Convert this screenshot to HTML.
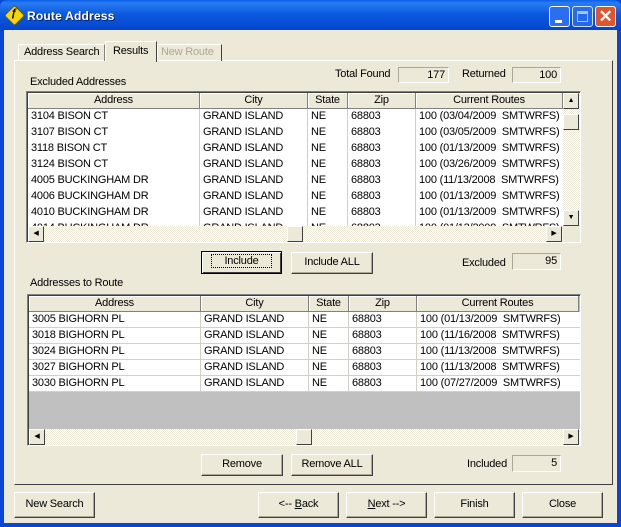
<!DOCTYPE html>
<html><head><style>
*{box-sizing:border-box}
body{margin:0;width:621px;height:527px;overflow:hidden;font-family:"Liberation Sans",sans-serif;font-size:11px;letter-spacing:-0.2px;color:#000;background:#0a45d8}
.a{position:absolute}
#title{left:0;top:0;width:621px;height:31px;background:linear-gradient(#0a5fe8,#2a7bf2 10%,#0b5ae0 45%,#0548d0 90%,#0a3fc0);border-radius:7px 7px 0 0}
#client{left:4px;top:30px;width:613px;height:493px;background:#ece9d8}
.btn{position:absolute;background:#ece9d8;border:1px solid;border-color:#fff #404040 #404040 #fff;box-shadow:inset -1px -1px 0 #aca899;text-align:center;line-height:19px}
.box{position:absolute;background:#ece9d8;border:1px solid;border-color:#aca899 #fff #fff #aca899;text-align:right;padding-right:3px;line-height:14px}
.grid{position:absolute;background:#fff;border:1px solid;border-color:#808080 #fff #fff #808080;box-shadow:inset 1px 1px 0 #404040;overflow:hidden}
.hd{position:absolute;top:1px;height:16px;background:#ece9d8;border-right:1px solid #808080;border-bottom:1px solid #808080;box-shadow:inset 1px 1px 0 #fff;text-align:center;line-height:15px}
.row{position:absolute;left:1px;height:16px;border-bottom:1px solid #d4d0c8;white-space:nowrap;background:#fff}
.c{position:absolute;top:0;height:16px;border-right:1px solid #d4d0c8;padding-left:3px;line-height:15px;overflow:hidden}
.sb{position:absolute;background:repeating-conic-gradient(#fff 0 25%,#ece9d8 0 50%) 0 0/2px 2px}
.sbb{position:absolute;width:16px;height:16px;background:#ece9d8;border:1px solid;border-color:#fff #404040 #404040 #fff;font-size:7px;text-align:center;line-height:14px}
</style></head><body>
<div id="title" class="a"></div>
<div class="a" style="left:7px;top:8px;width:15px;height:15px;background:#f5d60a;transform:rotate(45deg);border:1px solid #6a5a00;border-radius:2px"></div>
<div class="a" style="left:11px;top:7px;font-weight:bold;font-size:11px">ƒ</div>
<div class="a" style="left:27px;top:9px;color:#fff;font-weight:bold;font-size:12px;letter-spacing:0.2px;text-shadow:1px 1px #0a246a">Route Address</div>
<div class="a" style="left:549px;top:6px;width:21px;height:21px;background:#2b6ff0;border:1px solid #fff;border-radius:3px"><div class="a" style="left:5px;top:13px;width:7px;height:3px;background:#fff"></div></div>
<div class="a" style="left:572px;top:6px;width:21px;height:21px;background:#2b6ff0;border:1px solid #fff;border-radius:3px;opacity:.8"><div class="a" style="left:4px;top:4px;width:11px;height:11px;border:1px solid #cfe0ff;border-top-width:3px"></div></div>
<div class="a" style="left:595px;top:6px;width:21px;height:21px;background:#e0552d;border:1px solid #fff;border-radius:3px;color:#fff;font-weight:bold;font-size:17px;text-align:center;line-height:19px">✕</div>
<div id="client" class="a"></div>

<div class="a" style="left:14px;top:60px;width:599px;height:425px;border:1px solid;border-color:#fff #404040 #404040 #fff"></div>
<div class="a" style="left:18px;top:44px;width:87px;height:17px;border:1px solid;border-color:#fff #808080 transparent #fff;border-bottom:none;padding-left:5px;line-height:15px">Address Search</div>
<div class="a" style="left:105px;top:41px;width:52px;height:21px;background:#ece9d8;border:1px solid;border-color:#fff #404040 transparent #fff;border-bottom:none;padding-left:7px;line-height:19px">Results</div>
<div class="a" style="left:157px;top:44px;width:65px;height:17px;border:1px solid;border-color:#fff #404040 transparent #fff;border-bottom:none;padding-left:3px;line-height:15px;color:#aca899">New Route</div>

<div class="a" style="left:335px;top:68px">Total Found</div>
<div class="box" style="left:398px;top:67px;width:51px;height:16px">177</div>
<div class="a" style="left:462px;top:68px">Returned</div>
<div class="box" style="left:512px;top:67px;width:49px;height:16px">100</div>
<div class="a" style="left:30px;top:76px">Excluded Addresses</div>

<div class="grid" style="left:26px;top:91px;width:555px;height:152px">
<div class="hd" style="left:1px;width:172px">Address</div>
<div class="hd" style="left:173px;width:108px">City</div>
<div class="hd" style="left:281px;width:40px">State</div>
<div class="hd" style="left:321px;width:68px">Zip</div>
<div class="hd" style="left:389px;width:147px">Current Routes</div>
<div class="row" style="top:17px"><div class="c" style="left:0;width:172px">3104 BISON CT</div><div class="c" style="left:172px;width:108px">GRAND ISLAND</div><div class="c" style="left:280px;width:40px">NE</div><div class="c" style="left:320px;width:68px">68803</div><div class="c" style="left:388px;width:147px;border:0">100 (03/04/2009 &nbsp;SMTWRFS)</div></div>
<div class="row" style="top:33px"><div class="c" style="left:0;width:172px">3107 BISON CT</div><div class="c" style="left:172px;width:108px">GRAND ISLAND</div><div class="c" style="left:280px;width:40px">NE</div><div class="c" style="left:320px;width:68px">68803</div><div class="c" style="left:388px;width:147px;border:0">100 (03/05/2009 &nbsp;SMTWRFS)</div></div>
<div class="row" style="top:49px"><div class="c" style="left:0;width:172px">3118 BISON CT</div><div class="c" style="left:172px;width:108px">GRAND ISLAND</div><div class="c" style="left:280px;width:40px">NE</div><div class="c" style="left:320px;width:68px">68803</div><div class="c" style="left:388px;width:147px;border:0">100 (01/13/2009 &nbsp;SMTWRFS)</div></div>
<div class="row" style="top:65px"><div class="c" style="left:0;width:172px">3124 BISON CT</div><div class="c" style="left:172px;width:108px">GRAND ISLAND</div><div class="c" style="left:280px;width:40px">NE</div><div class="c" style="left:320px;width:68px">68803</div><div class="c" style="left:388px;width:147px;border:0">100 (03/26/2009 &nbsp;SMTWRFS)</div></div>
<div class="row" style="top:81px"><div class="c" style="left:0;width:172px">4005 BUCKINGHAM DR</div><div class="c" style="left:172px;width:108px">GRAND ISLAND</div><div class="c" style="left:280px;width:40px">NE</div><div class="c" style="left:320px;width:68px">68803</div><div class="c" style="left:388px;width:147px;border:0">100 (11/13/2008 &nbsp;SMTWRFS)</div></div>
<div class="row" style="top:97px"><div class="c" style="left:0;width:172px">4006 BUCKINGHAM DR</div><div class="c" style="left:172px;width:108px">GRAND ISLAND</div><div class="c" style="left:280px;width:40px">NE</div><div class="c" style="left:320px;width:68px">68803</div><div class="c" style="left:388px;width:147px;border:0">100 (01/13/2009 &nbsp;SMTWRFS)</div></div>
<div class="row" style="top:113px"><div class="c" style="left:0;width:172px">4010 BUCKINGHAM DR</div><div class="c" style="left:172px;width:108px">GRAND ISLAND</div><div class="c" style="left:280px;width:40px">NE</div><div class="c" style="left:320px;width:68px">68803</div><div class="c" style="left:388px;width:147px;border:0">100 (01/13/2009 &nbsp;SMTWRFS)</div></div>
<div class="row" style="top:129px"><div class="c" style="left:0;width:172px">4014 BUCKINGHAM DR</div><div class="c" style="left:172px;width:108px">GRAND ISLAND</div><div class="c" style="left:280px;width:40px">NE</div><div class="c" style="left:320px;width:68px">68803</div><div class="c" style="left:388px;width:147px;border:0">100 (01/13/2009 &nbsp;SMTWRFS)</div></div>
<div class="sb" style="left:536px;top:1px;width:17px;height:134px"></div>
<div class="sbb" style="left:536px;top:1px">▲</div>
<div class="sbb" style="left:536px;top:22px;height:16px"></div>
<div class="sbb" style="left:536px;top:118px">▼</div>
<div class="sb" style="left:1px;top:134px;width:535px;height:16px"></div>
<div class="sbb" style="left:1px;top:134px">◀</div>
<div class="sbb" style="left:260px;top:134px"></div>
<div class="sbb" style="left:519px;top:134px">▶</div>
<div class="a" style="left:536px;top:134px;width:17px;height:17px;background:#ece9d8"></div>
</div>

<div class="btn" style="left:201px;top:251px;width:81px;height:23px;border-color:#000;box-shadow:inset 1px 1px 0 #fff,inset -1px -1px 0 #404040"><span style="border:1px dotted #000;padding:0 12px">Include</span></div>
<div class="btn" style="left:291px;top:252px;width:82px;height:22px">Include ALL</div>
<div class="a" style="left:462px;top:257px">Excluded</div>
<div class="box" style="left:512px;top:253px;width:49px;height:17px">95</div>
<div class="a" style="left:30px;top:277px">Addresses to Route</div>

<div class="grid" style="left:27px;top:294px;width:554px;height:152px;background:#c0c0c0">
<div class="hd" style="left:1px;width:172px">Address</div>
<div class="hd" style="left:173px;width:108px">City</div>
<div class="hd" style="left:281px;width:40px">State</div>
<div class="hd" style="left:321px;width:68px">Zip</div>
<div class="hd" style="left:389px;width:162px">Current Routes</div>
<div class="row" style="top:17px;width:551px"><div class="c" style="left:0;width:172px">3005 BIGHORN PL</div><div class="c" style="left:172px;width:108px">GRAND ISLAND</div><div class="c" style="left:280px;width:40px">NE</div><div class="c" style="left:320px;width:68px">68803</div><div class="c" style="left:388px;width:162px;border:0">100 (01/13/2009 &nbsp;SMTWRFS)</div></div>
<div class="row" style="top:33px;width:551px"><div class="c" style="left:0;width:172px">3018 BIGHORN PL</div><div class="c" style="left:172px;width:108px">GRAND ISLAND</div><div class="c" style="left:280px;width:40px">NE</div><div class="c" style="left:320px;width:68px">68803</div><div class="c" style="left:388px;width:162px;border:0">100 (11/16/2008 &nbsp;SMTWRFS)</div></div>
<div class="row" style="top:49px;width:551px"><div class="c" style="left:0;width:172px">3024 BIGHORN PL</div><div class="c" style="left:172px;width:108px">GRAND ISLAND</div><div class="c" style="left:280px;width:40px">NE</div><div class="c" style="left:320px;width:68px">68803</div><div class="c" style="left:388px;width:162px;border:0">100 (11/13/2008 &nbsp;SMTWRFS)</div></div>
<div class="row" style="top:65px;width:551px"><div class="c" style="left:0;width:172px">3027 BIGHORN PL</div><div class="c" style="left:172px;width:108px">GRAND ISLAND</div><div class="c" style="left:280px;width:40px">NE</div><div class="c" style="left:320px;width:68px">68803</div><div class="c" style="left:388px;width:162px;border:0">100 (11/13/2008 &nbsp;SMTWRFS)</div></div>
<div class="row" style="top:81px;width:551px"><div class="c" style="left:0;width:172px">3030 BIGHORN PL</div><div class="c" style="left:172px;width:108px">GRAND ISLAND</div><div class="c" style="left:280px;width:40px">NE</div><div class="c" style="left:320px;width:68px">68803</div><div class="c" style="left:388px;width:162px;border:0">100 (07/27/2009 &nbsp;SMTWRFS)</div></div>
<div class="sb" style="left:1px;top:134px;width:551px;height:16px"></div>
<div class="sbb" style="left:1px;top:134px">◀</div>
<div class="sbb" style="left:268px;top:134px"></div>
<div class="sbb" style="left:535px;top:134px">▶</div>
</div>

<div class="btn" style="left:201px;top:454px;width:82px;height:22px">Remove</div>
<div class="btn" style="left:291px;top:454px;width:82px;height:22px">Remove ALL</div>
<div class="a" style="left:467px;top:458px">Included</div>
<div class="box" style="left:512px;top:455px;width:49px;height:17px">5</div>

<div class="btn" style="left:14px;top:492px;width:81px;height:26px;line-height:23px">New Search</div>
<div class="btn" style="left:258px;top:492px;width:81px;height:26px;line-height:23px">&lt;-- <u>B</u>ack</div>
<div class="btn" style="left:346px;top:492px;width:81px;height:26px;line-height:23px"><u>N</u>ext --&gt;</div>
<div class="btn" style="left:434px;top:492px;width:81px;height:26px;line-height:23px">Finish</div>
<div class="btn" style="left:522px;top:492px;width:81px;height:26px;line-height:23px">Close</div>
</body></html>
